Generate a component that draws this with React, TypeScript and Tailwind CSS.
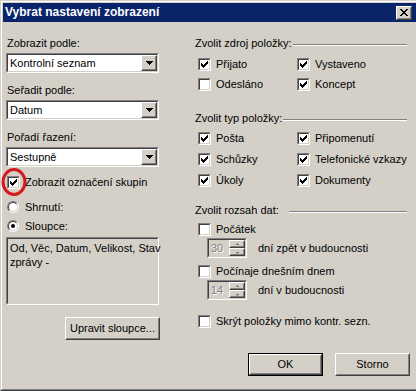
import React from "react";

const sunkenOuter = "border border-t-[#808080] border-l-[#808080] border-b-white border-r-white";
const sunkenInner = "border border-t-[#404040] border-l-[#404040] border-b-[#D4D0C8] border-r-[#D4D0C8]";
const raisedOuter = "border border-t-white border-l-white border-b-[#404040] border-r-[#404040]";
const raisedInner = "border border-t-[#D4D0C8] border-l-[#D4D0C8] border-b-[#808080] border-r-[#808080]";

function CheckMark() {
    return (
        <svg width="7" height="7" viewBox="0 0 7 7" shapeRendering="crispEdges">
            {[2, 3, 4, 3, 2, 1, 0].map((y, x) => (
                <rect key={x} x={x} y={y} width="1" height="3" fill="#000" />
            ))}
        </svg>
    );
}

function Box({ checked }: { checked: boolean }) {
    return (
        <div className={`w-[13px] h-[13px] shrink-0 ${sunkenOuter}`}>
            <div className={`w-full h-full bg-white flex items-center justify-center ${sunkenInner}`}>
                {checked && <CheckMark />}
            </div>
        </div>
    );
}

function CheckRow({ label, checked }: { label: string; checked: boolean }) {
    return (
        <div className="flex items-center gap-[5px] h-[13px] whitespace-nowrap">
            <Box checked={checked} />
            <span>{label}</span>
        </div>
    );
}

function Radio({ label, selected }: { label: string; selected: boolean }) {
    return (
        <div className="flex items-center gap-[6px] h-[12px] whitespace-nowrap">
            <div className={`w-[12px] h-[12px] shrink-0 rounded-full ${sunkenOuter}`}>
                <div className={`w-full h-full rounded-full bg-white flex items-center justify-center ${sunkenInner}`}>
                    {selected && <div className="w-[4px] h-[4px] rounded-full bg-black" />}
                </div>
            </div>
            <span>{label}</span>
        </div>
    );
}

function DownArrow() {
    return (
        <svg width="7" height="4" viewBox="0 0 7 4" shapeRendering="crispEdges">
            <rect x="0" y="0" width="7" height="1" fill="#000" />
            <rect x="1" y="1" width="5" height="1" fill="#000" />
            <rect x="2" y="2" width="3" height="1" fill="#000" />
            <rect x="3" y="3" width="1" height="1" fill="#000" />
        </svg>
    );
}

function Combo({ value }: { value: string }) {
    return (
        <div className={`w-[153px] h-[20px] ${sunkenOuter}`}>
            <div className={`h-full bg-white flex items-center justify-between ${sunkenInner}`}>
                <span className="pl-[2px] whitespace-nowrap">{value}</span>
                <div className={`w-[16px] h-[16px] shrink-0 bg-[#D4D0C8] ${raisedOuter}`}>
                    <div className={`w-full h-full flex items-center justify-center ${raisedInner}`}>
                        <DownArrow />
                    </div>
                </div>
            </div>
        </div>
    );
}

function SpinArrow({ up }: { up: boolean }) {
    return (
        <svg width="5" height="3" viewBox="0 0 5 3" shapeRendering="crispEdges">
            {up ? (
                <>
                    <rect x="2" y="0" width="1" height="1" fill="#808080" />
                    <rect x="1" y="1" width="3" height="1" fill="#808080" />
                </>
            ) : (
                <>
                    <rect x="1" y="1" width="3" height="1" fill="#808080" />
                    <rect x="2" y="2" width="1" height="1" fill="#808080" />
                </>
            )}
        </svg>
    );
}

function Spinner({ value }: { value: string }) {
    return (
        <div className={`w-[40px] h-[20px] shrink-0 ${sunkenOuter}`}>
            <div className={`h-full bg-[#D4D0C8] flex items-center justify-between ${sunkenInner}`}>
                <span className="pl-[2px] text-[#808080] [text-shadow:1px_1px_0_#ffffff]">{value}</span>
                <div className="flex flex-col w-[16px] h-full">
                    {[true, false].map((up) => (
                        <div key={String(up)} className={`h-[8px] ${raisedOuter}`}>
                            <div className={`w-full h-full flex items-center justify-center ${raisedInner}`}>
                                <SpinArrow up={up} />
                            </div>
                        </div>
                    ))}
                </div>
            </div>
        </div>
    );
}

function Button({ label, width, isDefault }: { label: string; width: string; isDefault?: boolean }) {
    return (
        <div className={`${width} h-[23px] ${isDefault ? "border border-black" : ""}`}>
            <div className={`h-full ${raisedOuter}`}>
                <div className={`h-full flex items-center justify-center whitespace-nowrap ${raisedInner}`}>
                    {label}
                </div>
            </div>
        </div>
    );
}

function GroupTitle({ label, gap }: { label: string; gap?: boolean }) {
    return (
        <div className="flex items-center h-[13px] pr-[3px]">
            <span className="whitespace-nowrap">{label}</span>
            <div className={`flex-1 h-[2px] mt-[2px] border-t border-t-[#808080] border-b border-b-white ${gap ? "ml-[10px]" : "ml-[1px]"}`} />
        </div>
    );
}

export default function App() {
    return (
        <div className="w-[416px] h-[391px] bg-[#D4D0C8] overflow-hidden relative font-['Liberation_Sans',Arial,sans-serif] text-[11px] leading-[13px] text-black">
            <div className="h-full border-l border-t border-b border-l-[#D4D0C8] border-t-[#D4D0C8] border-b-[#404040]">
                <div className="h-full flex flex-col pl-[1px] pt-[1px] border-l border-t border-b border-l-white border-t-white border-b-[#808080]">

                    {/* title bar */}
                    <div className="h-[19px] shrink-0 bg-[#0A246A] flex items-center justify-between pl-[2px] pr-[4px]">
                        <span className="text-white font-bold text-[12px] whitespace-nowrap">Vybrat nastavení zobrazení</span>
                        <div className={`w-[16px] h-[14px] bg-[#D4D0C8] ${raisedOuter}`}>
                            <div className={`w-full h-full flex items-center justify-center ${raisedInner}`}>
                                <svg width="8" height="7" viewBox="0 0 8 7" shapeRendering="crispEdges">
                                    {[0, 1, 2, 3, 4, 5, 6].map((i) => (
                                        <React.Fragment key={i}>
                                            <rect x={i} y={i} width="2" height="1" fill="#000" />
                                            <rect x={6 - i} y={i} width="2" height="1" fill="#000" />
                                        </React.Fragment>
                                    ))}
                                </svg>
                            </div>
                        </div>
                    </div>

                    <div className="flex-1 flex pt-[15px] pl-[3px]">

                        {/* left column */}
                        <div className="w-[154px] flex flex-col">
                            <div className="pl-[1px]">Zobrazit podle:</div>
                            <div className="mt-[3px]"><Combo value="Kontrolní seznam" /></div>
                            <div className="pl-[1px] mt-[11px]">Seřadit podle:</div>
                            <div className="mt-[3px]"><Combo value="Datum" /></div>
                            <div className="pl-[1px] mt-[11px]">Pořadí řazení:</div>
                            <div className="mt-[3px]"><Combo value="Sestupně" /></div>

                            <div className="relative mt-[9px] pl-[1px]">
                                <CheckRow label="Zobrazit označení skupin" checked />
                                <svg className="absolute left-[-6px] top-[-14px] pointer-events-none" width="30" height="40" viewBox="0 0 30 40">
                                    <ellipse cx="14" cy="20" rx="11" ry="12.5" fill="none" stroke="#D41A1A" strokeWidth="3" />
                                </svg>
                            </div>

                            <div className="mt-[12px] pl-[1px]"><Radio label="Shrnutí:" selected={false} /></div>
                            <div className="mt-[7px] pl-[1px]"><Radio label="Sloupce:" selected /></div>

                            <div className={`mt-[5px] w-[153px] h-[68px] ${sunkenOuter}`}>
                                <div className={`h-full pt-[2px] pl-[2px] leading-[14px] whitespace-nowrap ${sunkenInner}`}>
                                    Od, Věc, Datum, Velikost, Stav<br />zprávy -
                                </div>
                            </div>

                            <div className="mt-[12px] ml-[59px]">
                                <Button label="Upravit sloupce..." width="w-[95px]" />
                            </div>
                        </div>

                        {/* right column */}
                        <div className="ml-[35px] w-[215px] flex flex-col">
                            <GroupTitle label="Zvolit zdroj položky:" />
                            <div className="mt-[8px] pl-[3px] grid grid-cols-[99px_1fr] gap-y-[7px]">
                                <CheckRow label="Přijato" checked />
                                <CheckRow label="Vystaveno" checked />
                                <CheckRow label="Odesláno" checked={false} />
                                <CheckRow label="Koncept" checked />
                            </div>

                            <div className="mt-[21px]"><GroupTitle label="Zvolit typ položky:" /></div>
                            <div className="mt-[7px] pl-[3px] grid grid-cols-[99px_1fr] gap-y-[8px]">
                                <CheckRow label="Pošta" checked />
                                <CheckRow label="Připomenutí" checked />
                                <CheckRow label="Schůzky" checked />
                                <CheckRow label="Telefonické vzkazy" checked />
                                <CheckRow label="Úkoly" checked />
                                <CheckRow label="Dokumenty" checked />
                            </div>

                            <div className="mt-[17px]"><GroupTitle label="Zvolit rozsah dat:" gap /></div>
                            <div className="mt-[6px] pl-[3px]"><CheckRow label="Počátek" checked={false} /></div>
                            <div className="mt-[2px] pl-[12px] flex items-center gap-[11px]">
                                <Spinner value="30" />
                                <span className="whitespace-nowrap">dní zpět v budoucnosti</span>
                            </div>
                            <div className="mt-[7px] pl-[3px]"><CheckRow label="Počínaje dnešním dnem" checked={false} /></div>
                            <div className="mt-[2px] pl-[12px] flex items-center gap-[11px]">
                                <Spinner value="14" />
                                <span className="whitespace-nowrap">dní v budoucnosti</span>
                            </div>
                            <div className="mt-[15px] pl-[3px]"><CheckRow label="Skrýt položky mimo kontr. sezn." checked={false} /></div>

                            <div className="mt-[25px] flex justify-end gap-[12px]">
                                <Button label="OK" width="w-[75px]" isDefault />
                                <Button label="Storno" width="w-[75px]" />
                            </div>
                        </div>

                    </div>
                </div>
            </div>
        </div>
    );
}
